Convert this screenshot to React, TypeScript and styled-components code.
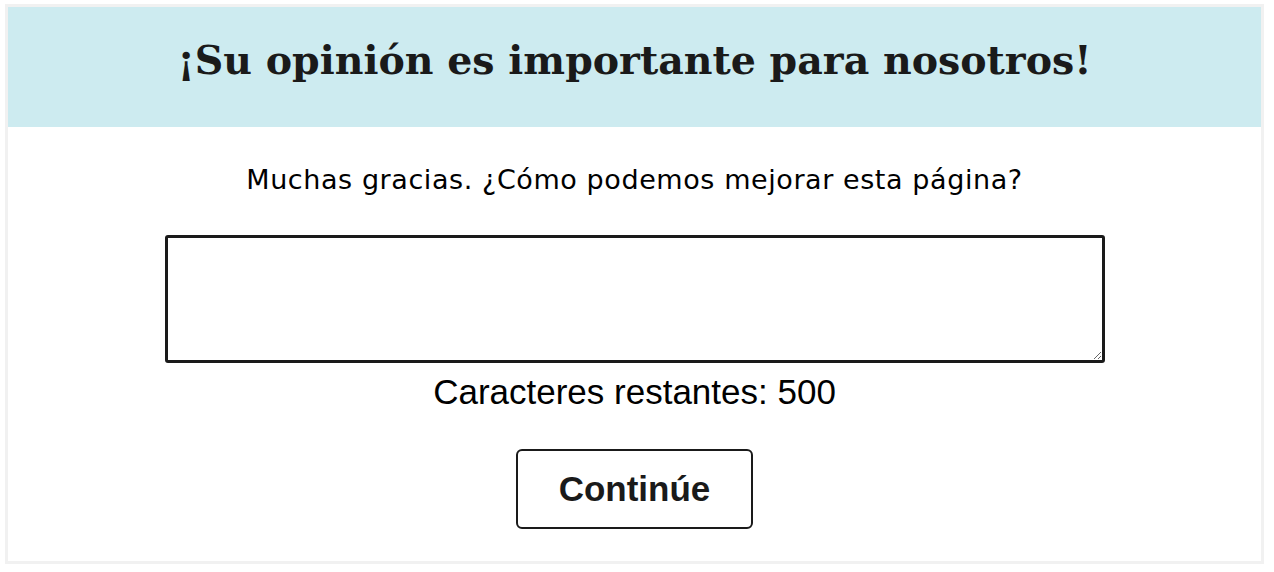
import React, { useState } from "react";
import styled, { createGlobalStyle } from "styled-components";

const Global = createGlobalStyle`
  html, body { margin: 0; padding: 0; background: #ffffff; }
  body { padding: 4px 0 0 5px; }
  * { box-sizing: border-box; }
`;

const Card = styled.section`
  width: 1259px;
  height: 560px;
  border: 3px solid #f1f1f1;
  background: #ffffff;
  display: flex;
  flex-direction: column;
`;

const Header = styled.header`
  height: 120px;
  padding-bottom: 14px;
  background: #cdebf0;
  display: flex;
  align-items: center;
  justify-content: center;
`;

const Title = styled.h1`
  margin: 0;
  font-family: "DejaVu Serif", "Liberation Serif", serif;
  font-weight: 700;
  font-size: 39.5px;
  color: #1a1a1a;
  letter-spacing: 0;
`;

const Body = styled.div`
  display: flex;
  flex-direction: column;
  align-items: center;
  padding-top: 38px;
`;

const Question = styled.label`
  font-family: "DejaVu Sans", Verdana, sans-serif;
  font-size: 27px;
  color: #000000;
  line-height: 30px;
  letter-spacing: 0.58px;
`;

const TextArea = styled.textarea`
  margin-top: 40px;
  width: 940px;
  height: 128px;
  border: 3px solid #1a1a1a;
  border-radius: 3px;
  padding: 8px;
  font-family: "Liberation Sans", Arial, sans-serif;
  font-size: 20px;
  resize: vertical;
  outline: none;
  display: block;
`;

const Counter = styled.p`
  margin: 9px 0 0;
  font-family: "Liberation Sans", Arial, sans-serif;
  font-size: 35px;
  line-height: 40px;
  color: #000000;
`;

const Button = styled.button`
  margin-top: 37px;
  width: 237px;
  height: 80px;
  border: 2px solid #1a1a1a;
  border-radius: 6px;
  background: #ffffff;
  font-family: "Liberation Sans", Arial, sans-serif;
  font-weight: 700;
  font-size: 35px;
  color: #1a1a1a;
  cursor: pointer;
`;

export default function App() {
  const [text, setText] = useState("");
  return (
    <>
      <Global />
      <Card>
        <Header>
          <Title>¡Su opinión es importante para nosotros!</Title>
        </Header>
        <Body>
          <Question htmlFor="fb">Muchas gracias. ¿Cómo podemos mejorar esta página?</Question>
          <TextArea id="fb" value={text} maxLength={500} onChange={(e) => setText(e.target.value)} />
          <Counter>Caracteres restantes: {500 - text.length}</Counter>
          <Button type="button">Continúe</Button>
        </Body>
      </Card>
    </>
  );
}
